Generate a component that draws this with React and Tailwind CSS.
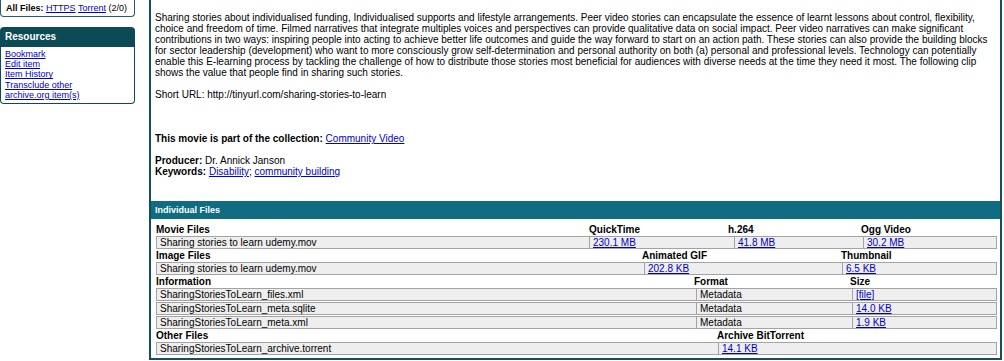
import React from "react";

const font = { fontFamily: '"Liberation Sans", Arial, Helvetica, sans-serif' };

function L({ children }) {
  return <a href="#" className="text-[#0000cc] underline">{children}</a>;
}

function Labels({ cols, items }) {
  return (
    <div className="grid h-[13px] text-[10px] leading-[13px] font-bold text-black" style={{ gridTemplateColumns: cols }}>
      {items.map((t, i) => (
        <div key={i} className="whitespace-nowrap">{t}</div>
      ))}
    </div>
  );
}

function Row({ cols, cells, className = "" }) {
  return (
    <div className={`grid h-[13px] border border-[#a3a3a3] bg-[#eeeeee] text-[10px] leading-[11px] text-black ${className}`} style={{ gridTemplateColumns: cols }}>
      {cells.map((c, i) => (
        <div key={i} className={`whitespace-nowrap pl-[3px] ${i > 0 ? "border-l border-[#a3a3a3]" : ""}`}>{c}</div>
      ))}
    </div>
  );
}

export default function App() {
  const movieCols = "432px 145px 129px 1fr";
  const imageCols = "487px 198px 1fr";
  const infoCols = "539px 156px 1fr";
  const otherCols = "561px 1fr";
  return (
    <div className="w-[1004px] h-[361px] bg-white overflow-hidden flex" style={font}>
      {/* sidebar */}
      <div className="w-[135px] shrink-0 flex flex-col">
        <div className="h-[17px] border-x border-b border-[#2f5a63] rounded-b-[4px] pl-[5px] pt-[3px] text-[9px] leading-[10px] text-black whitespace-nowrap">
          <b>All Files:</b> <L>HTTPS</L> <L>Torrent</L> (2/0)
        </div>
        <div className="mt-[10px]">
          <div className="h-[20px] bg-[#0c4b56] rounded-t-[4px] pl-[5px] text-[10px] leading-[20px] font-bold text-white">Resources</div>
          <div className="border-x border-b border-[#0c4b56] rounded-b-[4px] pl-[4px] pt-[2px] pb-[3px] text-[9px] leading-[10.2px] flex flex-col items-start">
            <L>Bookmark</L>
            <L>Edit item</L>
            <L>Item History</L>
            <L>Transclude other</L>
            <L>archive.org item(s)</L>
          </div>
        </div>
      </div>

      {/* main */}
      <div className="ml-[14px] w-[853px] h-[360px] border-x-2 border-b-2 border-[#11505c] flex flex-col">
        <div className="pl-[4px] pt-[12px] text-[10px] leading-[11px] text-black whitespace-nowrap">
          <div>Sharing stories about individualised funding, Individualised supports and lifestyle arrangements. Peer video stories can encapsulate the essence of learnt lessons about control, flexibility,</div>
          <div>choice and freedom of time. Filmed narratives that integrate multiples voices and perspectives can provide qualitative data on social impact. Peer video narratives can make significant</div>
          <div>contributions in two ways: inspiring people into acting to achieve better life outcomes and guide the way forward to start on an action path. These stories can also provide the building blocks</div>
          <div>for sector leadership (development) who want to more consciously grow self-determination and personal authority on both (a) personal and professional levels. Technology can potentially</div>
          <div>enable this E-learning process by tackling the challenge of how to distribute those stories most beneficial for audiences with diverse needs at the time they need it most. The following clip</div>
          <div>shows the value that people find in sharing such stories.</div>
          <div className="h-[11px]" />
          <div>Short URL: http://tinyurl.com/sharing-stories-to-learn</div>
          <div className="h-[33px]" />
          <div><b>This movie is part of the collection:</b> <L>Community Video</L></div>
          <div className="h-[11px]" />
          <div><b>Producer:</b> Dr. Annick Janson</div>
          <div><b>Keywords:</b> <L>Disability</L>; <L>community building</L></div>
        </div>

        <div className="mt-[24px] h-[18px] bg-[#106c82] pl-[4px] text-[9px] leading-[18px] font-bold text-white">Individual Files</div>

        <div className="ml-[5px] w-[841px] pt-[4px] flex flex-col">
          <Labels cols="433px 139px 133px 1fr" items={["Movie Files", "QuickTime", "h.264", "Ogg Video"]} />
          <Row cols={movieCols} cells={["Sharing stories to learn udemy.mov", <L>230.1 MB</L>, <L>41.8 MB</L>, <L>30.2 MB</L>]} />
          <Labels cols="486px 199px 1fr" items={["Image Files", "Animated GIF", "Thumbnail"]} />
          <Row cols={imageCols} cells={["Sharing stories to learn udemy.mov", <L>202.8 KB</L>, <L>6.5 KB</L>]} />
          <Labels cols="538px 156px 1fr" items={["Information", "Format", "Size"]} />
          <Row cols={infoCols} cells={["SharingStoriesToLearn_files.xml", "Metadata", <L>[file]</L>]} />
          <Row cols={infoCols} className="mt-[1px]" cells={["SharingStoriesToLearn_meta.sqlite", "Metadata", <L>14.0 KB</L>]} />
          <Row cols={infoCols} className="mt-[1px]" cells={["SharingStoriesToLearn_meta.xml", "Metadata", <L>1.9 KB</L>]} />
          <Labels cols="561px 1fr" items={["Other Files", "Archive BitTorrent"]} />
          <Row cols={otherCols} cells={["SharingStoriesToLearn_archive.torrent", <L>14.1 KB</L>]} />
        </div>
      </div>
    </div>
  );
}
